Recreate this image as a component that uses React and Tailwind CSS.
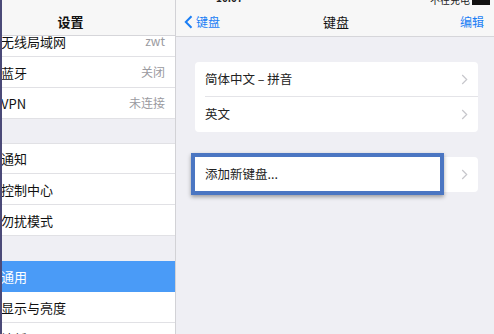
import React from "react";

const font = { fontFamily: '"Noto Sans CJK SC", "Noto Sans", sans-serif' };

function Chevron() {
  return (
    <svg width="7" height="11" viewBox="0 0 7 11" className="shrink-0">
      <path d="M1.2 1 L5.7 5.5 L1.2 10" fill="none" stroke="#c7c7cc" strokeWidth="1.2" />
    </svg>
  );
}

function LeftRow({ label, value, selected, top }) {
  return (
    <div
      className={`h-[31px] shrink-0 flex items-center justify-between pl-[37px] pr-[12px] border-b ${
        selected ? "bg-[#4a9bf7] border-[#4a9bf7] text-white" : "bg-white border-[#e1e1e5] text-[#111]"
      } ${top ? "border-t border-t-[#e1e1e5]" : ""}`}
    >
      <span className="text-[13px] leading-none">{label}</span>
      {value && <span className="text-[12px] leading-none text-[#9a9aa0]">{value}</span>}
    </div>
  );
}

export default function App() {
  return (
    <div className="w-[494px] h-[334px] flex overflow-hidden bg-[#efeff4]" style={font}>
      {/* Left master panel */}
      <div className="w-[176px] h-full shrink-0 overflow-hidden border-r border-[#d2d2d6] border-l-2 border-l-[#4b4a78] bg-[#efeff4] flex">
        <div className="w-[213px] shrink-0 -ml-[38px] flex flex-col">
          <div className="relative z-10 h-[36px] shrink-0 bg-[#f7f7f7] border-b border-[#d6d6da] flex items-center justify-center pt-[8px]">
            <span className="text-[13px] font-bold text-[#111]">设置</span>
          </div>
          <div className="-mt-[10px] flex flex-col">
            <LeftRow label="无线局域网" value="zwt" />
            <LeftRow label="蓝牙" value="关闭" />
            <LeftRow label="VPN" value="未连接" />
            <div className="h-[24px] shrink-0" />
            <LeftRow label="通知" top />
            <LeftRow label="控制中心" />
            <LeftRow label="勿扰模式" />
            <div className="h-[25px] shrink-0" />
            <LeftRow label="通用" selected />
            <LeftRow label="显示与亮度" />
            <LeftRow label="墙纸" />
          </div>
        </div>
      </div>

      {/* Right detail panel */}
      <div className="flex-1 h-full flex flex-col">
        <div className="relative h-[37px] shrink-0 bg-[#f7f7f7] border-b border-[#d6d6da] flex items-center justify-between pl-[8px] pr-[10px] pt-[8px]">
          <span className="absolute left-[40px] -top-[10px] text-[10px] font-bold text-[#222]">10:07</span>
          <div className="absolute right-[4px] -top-[8px] flex items-center gap-[2px]">
            <span className="text-[10px] text-[#222]">不在充电</span>
            <div className="w-[18px] h-[8px] bg-[#111] mt-[3px]" />
          </div>
          <div className="flex items-center gap-[3px] text-[#1a7ef5]">
            <svg width="9" height="14" viewBox="0 0 9 14">
              <path d="M7.5 1.2 L1.8 7 L7.5 12.8" fill="none" stroke="#1a7ef5" strokeWidth="2" />
            </svg>
            <span className="text-[12px]">键盘</span>
          </div>
          <span className="text-[13px] text-[#111] -ml-[8px]">键盘</span>
          <span className="text-[12px] text-[#1a7ef5]">编辑</span>
        </div>

        <div className="flex flex-col pl-[19px] pr-[16px] pt-[25px]">
          <div className="bg-white rounded-[4px] flex flex-col">
            <div className="h-[35px] flex items-center justify-between ml-[10px] pr-[10px] border-b border-[#e4e4e8]">
              <span className="text-[12.5px] text-[#222]">简体中文 – 拼音</span>
              <Chevron />
            </div>
            <div className="h-[35px] flex items-center justify-between pl-[10px] pr-[10px]">
              <span className="text-[12.5px] text-[#222]">英文</span>
              <Chevron />
            </div>
          </div>

          <div className="relative mt-[25px] bg-white rounded-[4px] h-[35px] flex items-center justify-between pl-[10px] pr-[10px]">
            <div className="absolute -left-[4px] -top-[4px] w-[253px] h-[42px] border-[4px] border-[#4b76c2] bg-white shadow-[0_2px_4px_rgba(0,0,0,0.35)]" />
            <span className="relative text-[12.5px] text-[#222]">添加新键盘...</span>
            <Chevron />
          </div>
        </div>
      </div>
    </div>
  );
}
